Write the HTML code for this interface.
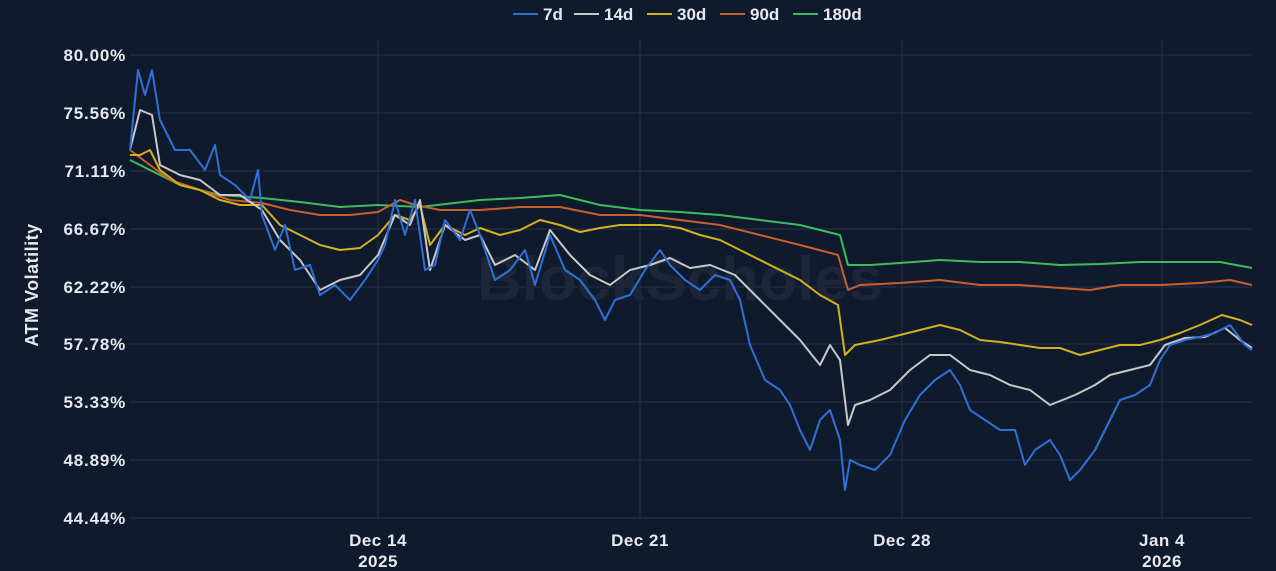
<!DOCTYPE html>
<html><head><style>
html,body{margin:0;padding:0;background:#0f1a2d;}
svg{display:block;font-family:"Liberation Sans",sans-serif;}
</style></head><body>
<svg width="1276" height="571" viewBox="0 0 1276 571">
<rect width="1276" height="571" fill="#0f1a2d"/>
<g stroke="#26324c" stroke-width="1">
<line x1="130" x2="1252" y1="55" y2="55"/><line x1="130" x2="1252" y1="113" y2="113"/>
<line x1="130" x2="1252" y1="171" y2="171"/><line x1="130" x2="1252" y1="229" y2="229"/>
<line x1="130" x2="1252" y1="287" y2="287"/><line x1="130" x2="1252" y1="344" y2="344"/>
<line x1="130" x2="1252" y1="402" y2="402"/><line x1="130" x2="1252" y1="460" y2="460"/>
<line x1="130" x2="1252" y1="518" y2="518"/>
<line x1="378" x2="378" y1="40" y2="518"/><line x1="640" x2="640" y1="40" y2="518"/>
<line x1="902" x2="902" y1="40" y2="518"/><line x1="1162" x2="1162" y1="40" y2="518"/>
</g>
<text x="680" y="300" font-size="62" font-weight="bold" fill="#1c2638" text-anchor="middle">BlockScholes</text>
<g fill="#e6e8ee" font-size="17" font-weight="bold" letter-spacing="0.8" text-anchor="end">
<text x="126" y="61">80.00%</text><text x="126" y="119">75.56%</text><text x="126" y="177">71.11%</text>
<text x="126" y="235">66.67%</text><text x="126" y="293">62.22%</text><text x="126" y="350">57.78%</text>
<text x="126" y="408">53.33%</text><text x="126" y="466">48.89%</text><text x="126" y="524">44.44%</text>
</g>
<text transform="translate(38,285) rotate(-90)" fill="#e6e8ee" font-size="18" font-weight="bold" letter-spacing="0.5" text-anchor="middle">ATM Volatility</text>
<g fill="#e6e8ee" font-size="17" font-weight="bold" letter-spacing="0.5" text-anchor="middle">
<text x="378" y="546">Dec 14</text><text x="378" y="567">2025</text>
<text x="640" y="546">Dec 21</text><text x="902" y="546">Dec 28</text>
<text x="1162" y="546">Jan 4</text><text x="1162" y="567">2026</text>
</g>
<g font-size="17" font-weight="bold" fill="#e6e8ee">
<line x1="513" x2="538" y1="14" y2="14" stroke="#2f6fd6" stroke-width="2"/><text x="543" y="20">7d</text>
<line x1="574" x2="599" y1="14" y2="14" stroke="#c8c8c8" stroke-width="2"/><text x="604" y="20">14d</text>
<line x1="647" x2="672" y1="14" y2="14" stroke="#d4b21e" stroke-width="2"/><text x="677" y="20">30d</text>
<line x1="720" x2="745" y1="14" y2="14" stroke="#c9602a" stroke-width="2"/><text x="750" y="20">90d</text>
<line x1="793" x2="818" y1="14" y2="14" stroke="#3dbd5a" stroke-width="2"/><text x="823" y="20">180d</text>
</g>
<g fill="none" stroke-width="2" stroke-linejoin="round">
<polyline stroke="#3dbd5a" points="130,160 150,170 180,185 220,195 262,198 300,202 340,207 378,205 420,207 480,200 520,198 560,195 600,205 640,210 680,212 720,215 760,220 800,225 840,235 848,265 870,265 900,263 940,260 980,262 1020,262 1060,265 1100,264 1140,262 1180,262 1220,262 1252,268"/>
<polyline stroke="#c9602a" points="130,150 150,165 170,180 200,190 230,200 262,203 290,210 320,215 350,215 378,212 400,200 415,205 440,210 480,210 520,207 560,207 600,215 640,215 680,220 720,225 760,235 800,245 838,255 848,290 860,285 900,283 940,280 980,285 1020,285 1060,288 1090,290 1120,285 1160,285 1200,283 1230,280 1252,285"/>
<polyline stroke="#d4b21e" points="130,155 140,155 150,150 160,170 180,185 200,190 220,200 240,205 262,205 280,225 300,235 320,245 340,250 360,248 378,235 395,215 410,220 420,205 430,245 445,225 465,235 480,228 500,235 520,230 540,220 560,225 580,232 600,228 620,225 640,225 660,225 680,228 700,235 720,240 740,250 760,260 780,270 800,280 820,295 838,305 845,355 855,345 880,340 900,335 920,330 940,325 960,330 980,340 1000,342 1020,345 1040,348 1060,348 1080,355 1100,350 1120,345 1140,345 1160,340 1180,333 1200,325 1222,315 1240,320 1252,325"/>
<polyline stroke="#c8c8c8" points="130,150 140,110 152,115 160,165 180,175 200,180 220,195 240,195 262,210 280,240 300,260 320,290 340,280 360,275 378,255 395,215 410,225 420,200 430,270 445,225 465,240 480,235 495,265 515,255 535,270 550,230 570,255 590,275 610,285 630,270 650,265 670,258 690,268 710,265 735,275 760,300 780,320 800,340 820,365 830,345 840,360 848,425 855,405 870,400 890,390 910,370 930,355 950,355 970,370 990,375 1010,385 1030,390 1050,405 1075,395 1095,385 1110,375 1130,370 1150,365 1165,345 1185,338 1205,337 1225,328 1240,340 1252,348"/>
<polyline stroke="#2f6fd6" points="130,150 138,70 145,95 152,70 160,120 175,150 190,150 205,170 215,145 220,175 235,185 250,200 258,170 262,215 275,250 285,225 295,270 310,265 320,295 335,285 350,300 365,280 378,260 385,245 395,200 405,235 415,200 425,270 435,265 445,220 460,240 470,210 480,235 495,280 510,270 525,250 535,285 550,235 565,270 580,280 595,300 605,320 615,300 630,295 645,270 660,250 670,265 685,280 700,290 715,275 730,280 740,300 750,345 765,380 780,390 790,405 800,430 810,450 820,420 830,410 840,440 845,490 850,460 860,465 875,470 890,455 905,420 920,395 935,380 950,370 960,385 970,410 985,420 1000,430 1015,430 1025,465 1035,450 1050,440 1060,455 1070,480 1080,470 1095,450 1110,420 1120,400 1135,395 1150,385 1160,360 1170,345 1185,340 1200,337 1215,333 1230,325 1245,345 1252,350"/>
</g>
</svg>
</body></html>
